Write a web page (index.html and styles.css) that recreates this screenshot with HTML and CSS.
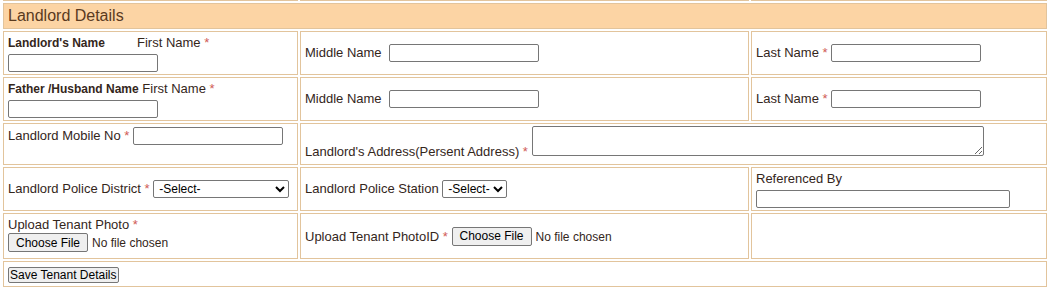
FILE: index.html
```html
<!DOCTYPE html>
<html lang="en">
<head>
<meta charset="utf-8">
<title>Landlord Details</title>
<link rel="stylesheet" href="styles.css">
</head>
<body>
<table class="form">
  <tr class="cut"><td class="c1"></td><td class="c2"></td><td class="c3"></td></tr>
  <tr class="h26"><td colspan="3" class="head">Landlord Details</td></tr>
  <tr class="h44">
    <td class="stack"><div class="lbl"><span class="strong wide">Landlord's Name</span>First Name <span class="req">*</span></div><input class="txt blk" type="text"></td>
    <td>Middle Name&nbsp; <input class="txt ctl" type="text"></td>
    <td>Last Name <span class="req">*</span> <input class="txt ctl" type="text"></td>
  </tr>
  <tr class="h44">
    <td class="stack"><div class="lbl"><span class="strong">Father /Husband Name</span> First Name <span class="req">*</span></div><input class="txt blk" type="text"></td>
    <td>Middle Name&nbsp; <input class="txt ctl" type="text"></td>
    <td>Last Name <span class="req">*</span> <input class="txt ctl" type="text"></td>
  </tr>
  <tr class="h42">
    <td class="top">Landlord Mobile No <span class="req">*</span> <input class="txt ctl" type="text"></td>
    <td colspan="2" class="top2">Landlord's Address(Persent Address) <span class="req">*</span> <textarea class="area"></textarea></td>
  </tr>
  <tr class="h44">
    <td>Landlord Police District <span class="req">*</span> <select class="sel sel-district ctl"><option>-Select-</option></select></td>
    <td>Landlord Police Station <select class="sel sel-station ctl"><option>-Select-</option></select></td>
    <td class="stack"><div class="lbl">Referenced By</div><input class="txt txt-wide blk" type="text"></td>
  </tr>
  <tr class="h46">
    <td class="stack"><div class="lbl">Upload Tenant Photo <span class="req">*</span></div><input class="file blk" type="file"></td>
    <td>Upload Tenant PhotoID <span class="req">*</span> <input class="file ctl" type="file"></td>
    <td></td>
  </tr>
  <tr class="h26">
    <td colspan="3" class="actions"><button class="save" type="button">Save Tenant Details</button></td>
  </tr>
</table>
</body>
</html>
```

FILE: styles.css
```css
html, body {
  margin: 0;
  padding: 0;
  background: #ffffff;
}

body {
  font-family: "Liberation Sans", Arial, sans-serif;
  font-size: 13px;
  color: #34261b;
}

.form {
  table-layout: fixed;
  width: 1048px;
  margin: -2px 0 0 1px;
  border-collapse: separate;
  border-spacing: 2px;
}

.form td {
  box-sizing: border-box;
  border: 1px solid #e2c49c;
  padding: 2px 4px;
  vertical-align: middle;
  white-space: nowrap;
}

.cut td {
  border-top: 0;
  padding: 0;
  height: 1px;
}

.c1 { width: 295px; }
.c2 { width: 449px; }
.c3 { width: 296px; }

.h26 { height: 26px; }
.h42 { height: 42px; }
.h44 { height: 44px; }
.h46 { height: 46px; }

.form td.head {
  background: #fcd4a4;
  padding: 0 4px;
  font-size: 16px;
  color: #5a3a1e;
}

.form td.stack {
  vertical-align: top;
  padding-top: 3px;
}

.form td.top {
  vertical-align: top;
  padding-top: 3px;
}

.form td.top2 {
  vertical-align: top;
  padding-top: 2px;
}

.form td.actions {
  vertical-align: top;
  padding-top: 5px;
}

.lbl {
  line-height: 16px;
}

.strong {
  font-weight: bold;
  font-size: 12px;
}

.wide {
  display: inline-block;
  width: 129px;
}

.req {
  color: #d05a55;
}

.txt,
.sel,
.area {
  font-family: "Liberation Sans", Arial, sans-serif;
  font-size: 12px;
  box-sizing: border-box;
  border: 1px solid #767676;
  border-radius: 2px;
  background: #ffffff;
  margin: 0;
  color: #000;
}

.txt {
  width: 150px;
  height: 18px;
  padding: 1px 2px;
}

.txt-wide {
  width: 254px;
}

.blk {
  display: block;
  margin-top: 3px;
}

.ctl {
  vertical-align: baseline;
}

.area {
  width: 452px;
  height: 30px;
  padding: 2px;
  vertical-align: baseline;
}

.sel {
  height: 18px;
  padding: 0 0 0 1px;
}

.sel-district { width: 136px; }
.sel-station { width: 65px; }

.file {
  font-family: "Liberation Sans", Arial, sans-serif;
  font-size: 12px;
  color: #34261b;
  margin: 0;
  height: 19px;
}

.file::file-selector-button {
  font-family: "Liberation Sans", Arial, sans-serif;
  font-size: 12px;
  color: #000;
  height: 19px;
  padding: 0 7px;
  margin: 0 4px 0 0;
  border: 1px solid #767676;
  border-radius: 2px;
  background: #efefef;
}

.save {
  display: block;
  font-family: "Liberation Sans", Arial, sans-serif;
  font-size: 12px;
  color: #000;
  height: 16px;
  padding: 0 1px;
  margin: 0;
  line-height: 14px;
  border: 1px solid #767676;
  border-radius: 2px;
  background: #efefef;
}
```
